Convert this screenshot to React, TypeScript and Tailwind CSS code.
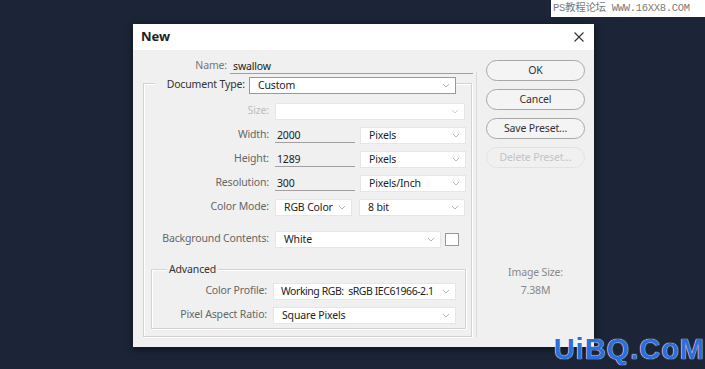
import React from 'react';

const ui = "font-['Noto_Sans',sans-serif]";

function Chevron({ light }: { light?: boolean }) {
  return (
    <svg width="8" height="5" viewBox="0 0 8 5" className="shrink-0">
      <path d="M1 1l3 3 3-3" fill="none" stroke={light ? '#d0d0d0' : '#b4b4b4'} strokeWidth="1" />
    </svg>
  );
}

function Select({ w, value, focus, disabled, tight }: { w: string; value?: string; focus?: boolean; disabled?: boolean; tight?: boolean }) {
  return (
    <div
      className={`${w} h-[17px] bg-white border flex items-center justify-between pr-[5px] ${
        tight ? 'pl-[7px]' : 'pl-[8px]'
      } ${focus ? 'border-[#7f9fbf]' : 'border-[#e6e6e6]'}`}
    >
      <span className={`text-[#222] whitespace-pre leading-[14px] ${tight ? 'tracking-[-0.45px]' : ''}`}>{value}</span>
      <Chevron light={disabled} />
    </div>
  );
}

function Field({ value }: { value: string }) {
  return (
    <div className="w-[80px] h-[16px] border-b border-[#a0a0a0] pl-[2px] flex items-center text-[#222] leading-[14px]">
      {value}
    </div>
  );
}

function Row({ label, children, labelW = 'w-[125px]', muted }: { label: string; children: React.ReactNode; labelW?: string; muted?: boolean }) {
  return (
    <div className="flex items-center h-[24px]">
      <span className={`${labelW} text-right shrink-0 ${muted ? 'text-[#bdbdbd]' : 'text-[#666]'}`}>{label}</span>
      <div className="ml-[6px] flex items-center">{children}</div>
    </div>
  );
}

function Btn({ children, disabled }: { children: React.ReactNode; disabled?: boolean }) {
  return (
    <div
      className={`w-[99px] h-[21px] rounded-full border flex items-center justify-center ${
        disabled ? 'border-[#e2e2e2] text-[#c4c4c4]' : 'border-[#a8a8a8] text-[#333] bg-[#f4f4f4]'
      }`}
    >
      {children}
    </div>
  );
}

export default function App() {
  return (
    <div className={`relative w-[705px] h-[369px] overflow-hidden bg-[#1b2537] ${ui} text-[10.5px] tracking-[-0.15px]`}>
      {/* watermark top */}
      <div className="absolute top-0 right-0 w-[154px] h-[17px] bg-white flex items-center pl-[2px] font-['Liberation_Mono','Noto_Sans_CJK_SC',monospace] text-[10.5px] text-[#7a7a7a] tracking-[-0.3px]">
        PS教程论坛 WWW.16XX8.COM
      </div>

      <div className="pt-[24px] pl-[133px]">
        <div className="w-[461px] h-[323px] bg-[#f0f0f0] shadow-[0_2px_8px_rgba(0,0,0,0.5)] flex flex-col">
          {/* title bar */}
          <div className="h-[26px] bg-white flex items-center justify-between pl-[8px] pr-[10px]">
            <span className="font-bold text-[13px] text-[#222] tracking-normal">New</span>
            <svg width="10" height="10" viewBox="0 0 10 10">
              <path d="M0.5 0.5l9 9M9.5 0.5l-9 9" stroke="#333" strokeWidth="1.1" />
            </svg>
          </div>

          <div className="flex flex-1">
            {/* left part */}
            <div className="w-[343px] flex flex-col">
              <div className="flex items-center h-[16px] mt-[8px]">
                <span className="w-[94px] text-right text-[#777]">Name:</span>
                <div className="ml-[3px] w-[243px] h-[16px] border-b border-[#a0a0a0] pl-[3px] flex items-center text-[#222] leading-[14px]">
                  swallow
                </div>
              </div>

              {/* main group */}
              <div className="ml-[10px] mt-[9px] w-[329px] h-[254px] border border-[#d3d3d3] shadow-[inset_1px_1px_0_#fff,1px_1px_0_#fff] flex flex-col">
                <div className="flex items-center h-[18px] -mt-[8px]">
                  <span className="ml-[11px] w-[90px] text-right text-[#333] bg-[#f0f0f0]">Document Type:</span>
                  <div className="pl-[4px] bg-[#f0f0f0]">
                    <Select w="w-[207px]" value="Custom" focus />
                  </div>
                </div>

                <div className="mt-[5px]">
                  <Row label="Size:" muted>
                    <Select w="w-[190px]" disabled />
                  </Row>
                </div>
                <Row label="Width:">
                  <Field value="2000" />
                  <div className="ml-[5px]">
                    <Select w="w-[106px]" value="Pixels" />
                  </div>
                </Row>
                <Row label="Height:">
                  <Field value="1289" />
                  <div className="ml-[5px]">
                    <Select w="w-[106px]" value="Pixels" />
                  </div>
                </Row>
                <Row label="Resolution:">
                  <Field value="300" />
                  <div className="ml-[5px]">
                    <Select w="w-[106px]" value="Pixels/Inch" />
                  </div>
                </Row>
                <Row label="Color Mode:">
                  <Select w="w-[77px]" value="RGB Color" />
                  <div className="ml-[7px]">
                    <Select w="w-[106px]" value="8 bit" />
                  </div>
                </Row>

                <div className="mt-[8px]">
                  <Row label="Background Contents:">
                    <Select w="w-[166px]" value="White" />
                    <div className="ml-[4px] w-[14px] h-[13px] bg-white border border-[#9a9a9a]" />
                  </Row>
                </div>

                {/* advanced group */}
                <div className="relative ml-[7px] mt-[18px] w-[315px] h-[60px] border border-[#d3d3d3] shadow-[inset_1px_1px_0_#fff,1px_1px_0_#fff] pt-[9px]">
                  <span className="absolute -top-[9px] left-[15px] px-[2px] bg-[#f0f0f0] text-[#333] leading-[16px]">
                    Advanced
                  </span>
                  <Row label="Color Profile:" labelW="w-[115px]">
                    <Select w="w-[183px]" value="Working RGB:  sRGB IEC61966-2.1" tight />
                  </Row>
                  <Row label="Pixel Aspect Ratio:" labelW="w-[115px]">
                    <Select w="w-[183px]" value="Square Pixels" />
                  </Row>
                </div>
              </div>
            </div>

            {/* separator */}
            <div className="w-px bg-[#dcdcdc] mt-[22px] mb-[10px]" />

            {/* right part */}
            <div className="flex-1 flex flex-col items-center pt-[10px] gap-[8px]">
              <Btn>OK</Btn>
              <Btn>Cancel</Btn>
              <Btn>Save Preset...</Btn>
              <Btn disabled>Delete Preset...</Btn>
              <div className="mt-[88px] flex flex-col items-center text-[#888] leading-[16px] gap-[2px]">
                <span>Image Size:</span>
                <span>7.38M</span>
              </div>
            </div>
          </div>
        </div>
      </div>

      {/* watermark bottom */}
      <div className="absolute right-0 bottom-[5px] w-[165px] text-right font-['Liberation_Sans',sans-serif] font-bold text-[29px] leading-[30px] text-[#2d6fd8] [text-shadow:0_0_1px_#fff,0_0_1px_#fff] tracking-[1px]">
        UiBQ.CoM
      </div>
    </div>
  );
}
